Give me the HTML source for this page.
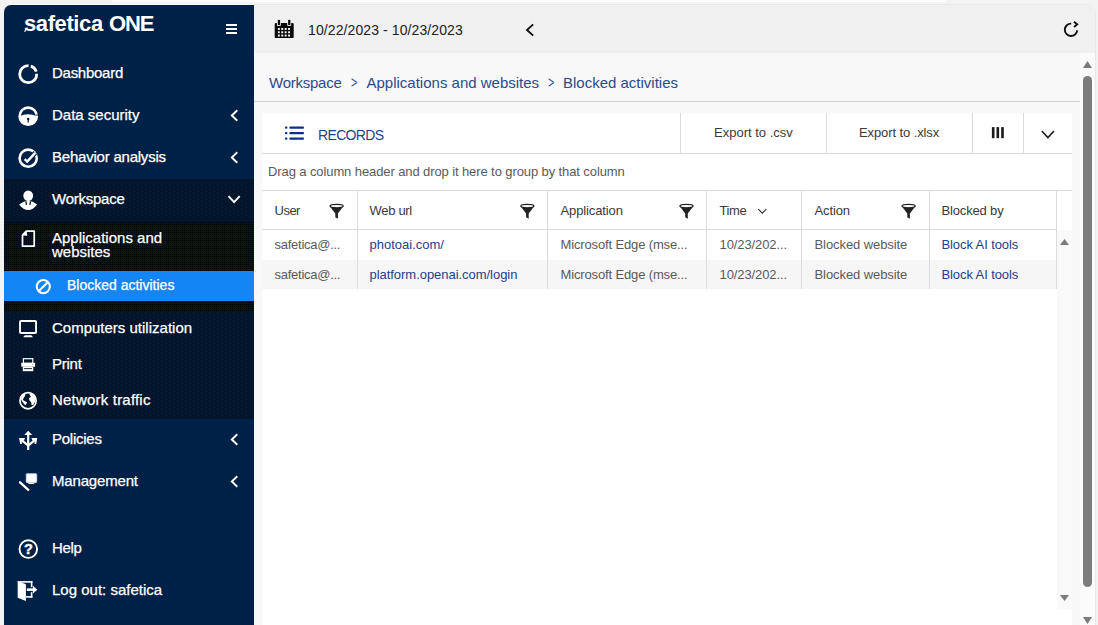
<!DOCTYPE html>
<html lang="en">
<head>
<meta charset="utf-8">
<title>Safetica ONE - Blocked activities</title>
<style>
*{box-sizing:border-box;margin:0;padding:0}
html,body{width:1098px;height:625px;overflow:hidden;background:#f3f3f3;font-family:"Liberation Sans",Arial,sans-serif;}
.abs{position:absolute}
.t{position:absolute;white-space:nowrap;line-height:1}
svg{position:absolute;overflow:visible}
#side{position:absolute;left:0;top:0;width:254px;height:625px}
#sidebg{position:absolute;left:4px;top:5px;width:250px;height:620px;background:#002147;border-top-left-radius:7px}
#side .t{color:#fff;font-size:15px;-webkit-text-stroke:0.25px #fff}
#main{position:absolute;left:0;top:0;width:1098px;height:625px}
#mainbg{position:absolute;left:254px;top:5px;width:841px;height:620px;background:#f8f8f8;border-top-right-radius:8px}
#topbar{position:absolute;left:254px;top:5px;width:841px;height:48px;background:#f0f0f0;border-top-right-radius:8px}
#card{position:absolute;left:262px;top:113px;width:810px;height:512px;background:#fff}
.hl{position:absolute;height:1px;background:#dcdcdc}
.vl{position:absolute;width:1px;background:#dcdcdc}
#main .t{font-size:13px;color:#3a3a3a}
#main .t.bc{font-size:15px;color:#2c4a8c}
#main .t.sep{transform:scale(.72,1.12);transform-origin:0 70%}
#main .t.lnk{color:#24408e}
#main .t.cell{color:#5a5a5a}
</style>
</head>
<body>
<div class="abs" style="left:112px;top:0;width:833px;height:2px;background:#fff"></div>
<div class="abs" style="left:4px;top:4px;width:260px;height:10px;background:#faf9f7;border-radius:8px 0 0 0"></div>
<div class="abs" style="left:254px;top:4px;width:842px;height:621px;background:#e9e9e9;border-radius:0 9px 0 0"></div>

<div id="side">
  <div id="sidebg"></div>
  <div class="t" id="logo" style="left:24px;top:13px;font-size:22px;font-weight:bold;letter-spacing:-0.4px;-webkit-text-stroke:0">safetica <span style="letter-spacing:-1.1px;margin-left:0.6px">ONE</span></div>
  <svg id="burger" style="left:225.7px;top:24px" width="11" height="10" viewBox="0 0 11 10"><path d="M0 1h11M0 5h11M0 9h11" stroke="#fff" stroke-width="2" fill="none"/></svg>

  <div class="abs" id="wsbg" style="left:4px;top:179px;width:250px;height:240px;background:#02152b"></div>
  <div class="abs" id="subbg" style="left:4px;top:221px;width:250px;height:90px;background:linear-gradient(#02152a 50%,transparent 50%) 0 0/2px 2px,linear-gradient(90deg,#000 50%,#02152a 50%) 0 0/2px 2px"></div>
  <div class="abs" style="left:4px;top:271px;width:250px;height:30px;background:#1485f5"></div>


  <svg id="sideicons" style="left:0;top:0" width="254" height="625" viewBox="0 0 254 625" fill="none" stroke="none">
    <pattern id="dots" width="8" height="8" patternUnits="userSpaceOnUse"><rect x="1" y="1" width="1" height="1" fill="#072250"/><rect x="5" y="3" width="1" height="1" fill="#072250"/><rect x="2" y="5" width="1" height="1" fill="#072250"/><rect x="6" y="7" width="1" height="1" fill="#072250"/></pattern>
    <rect x="4" y="181" width="250" height="38" fill="url(#dots)"/>
    <rect x="4" y="313" width="250" height="104" fill="url(#dots)"/>
    <path d="M26.3,28.4L24.6,31.7" stroke="#fff" stroke-width="1.2"/>
    <!-- dashboard -->
    <g stroke="#fff" stroke-width="2.8" fill="none">
      <path d="M36.69,73.76A8.5,8.5 0 1 1 28.50,65.71"/>
      <path d="M30.83,66.12A8.5,8.5 0 0 1 36.28,71.57"/>
    </g>
    <!-- data security -->
    <g>
      <circle cx="28.2" cy="116.2" r="8.6" stroke="#fff" stroke-width="2.6"/>
      <path d="M19,116.6Q28.2,111.8 37.4,116.6A9.3,9.3 0 0 1 19,116.6z" fill="#fff"/>
      <circle cx="28.2" cy="119" r="1.25" fill="#002147"/>
      <rect x="27.6" y="119" width="1.2" height="3.6" fill="#002147"/>
      <rect x="35.4" y="114.6" width="3" height="0.9" fill="#002147"/>
    </g>
    <!-- behavior analysis -->
    <g>
      <circle cx="28.2" cy="158.2" r="8.6" stroke="#fff" stroke-width="2.6"/>
      <path d="M24.6,159.2L27.2,161.6L35.4,152.6" stroke="#002147" stroke-width="4.6"/>
      <path d="M24.6,159.2L27.2,161.6L35.2,152.8" stroke="#fff" stroke-width="2.5"/>
    </g>
    <!-- workspace -->
    <g>
      <ellipse cx="28.2" cy="195.7" rx="4.9" ry="5.2" fill="#fff"/>
      <path d="M19.1,204.4Q23.6,200.9 28.2,200.8Q32.8,200.9 37.1,204.4Q33,209.9 28.2,209.9Q23.4,209.9 19.1,204.4z" fill="#fff"/>
      <path d="M25.9,201.3L26.5,204.9M30.5,201.3L29.9,204.9" stroke="#02152b" stroke-width="1.3"/>
    </g>
    <!-- applications and websites -->
    <g>
      <path d="M22.5,235.2L26.3,231.1H34.2V246.1H22.5z" stroke="#fff" stroke-width="1.7" stroke-linejoin="round"/>
      <path d="M22.5,235.4L26.6,231.1L27.3,235.7z" fill="#fff"/>
    </g>
    <!-- blocked -->
    <g stroke="#fff" stroke-width="2.1">
      <circle cx="43.3" cy="286.6" r="6.55"/>
      <path d="M38.6,291.3L48,281.9"/>
    </g>
    <!-- computers utilization -->
    <g>
      <rect x="20.05" y="321" width="16" height="12" rx="0.8" stroke="#fff" stroke-width="1.9"/>
      <path d="M24.8,335.2H31.4L33,337.3H23.2z" fill="#fff"/>
    </g>
    <!-- print -->
    <g>
      <rect x="23.4" y="358.7" width="9.4" height="4.6" stroke="#fff" stroke-width="1.2"/>
      <rect x="21.2" y="362.8" width="13.9" height="3.9" fill="#fff"/>
      <rect x="22.8" y="366.6" width="10.5" height="4.6" fill="#fff"/>
      <rect x="24" y="368.2" width="8" height="0.9" fill="#02152b"/>
      <rect x="32.2" y="364" width="0.9" height="0.9" fill="#8a8a8a"/>
    </g>
    <!-- network traffic -->
    <g>
      <circle cx="28.05" cy="400.7" r="8.1" stroke="#fff" stroke-width="1.7"/>
      <path d="M21.5,396.5L23.7,394.1L25.7,393.1L25.1,395.7L23.7,397.9L22.9,400.1L25.9,401.7L27.3,402.5L25.3,405.3L23.7,403.6L22.1,401.4L21.0,399.2z" fill="#fff"/>
      <path d="M29.3,393.9L31.2,393.7L33.9,395.6L35.2,398.4L35.0,401.7L33.3,405.1L31.6,405.3L31.2,402.2L29.3,400.3L29.0,398.3L30.8,396.9L30.2,395.5z" fill="#fff"/>
    </g>
    <!-- policies -->
    <g fill="#fff">
      <path d="M24.2,435.1L28.2,430.8L32.2,435.1z"/>
      <rect x="27.1" y="434" width="2.2" height="16"/>
      <path d="M19.1,438H25L24,440.4H21.8V444H20.2z"/>
      <path d="M37.3,438H31.4L32.4,440.4H34.6V444H36.2z"/>
      <path d="M21.6,440.2L28.2,445.6L34.8,440.2" stroke="#fff" stroke-width="2.3" fill="none"/>
    </g>
    <!-- management -->
    <g>
      <rect x="26.3" y="473.8" width="10.4" height="8.6" rx="0.6" fill="#fff" stroke="#d9dcef" stroke-width="0.9"/>
      <rect x="28.4" y="483" width="5.9" height="1" fill="#fff"/>
      <path d="M20,482.3L28.3,489.8" stroke="#fff" stroke-width="2.3" stroke-linecap="round"/>
    </g>
    <!-- help -->
    <g>
      <circle cx="28.3" cy="549.1" r="8.8" stroke="#fff" stroke-width="1.9"/>
      <text x="28.5" y="554.1" font-family="Liberation Sans, Arial, sans-serif" font-weight="bold" font-size="14.5" fill="#fff" stroke="#fff" stroke-width="0.4" text-anchor="middle">?</text>
    </g>
    <!-- logout -->
    <g fill="#fff">
      <path d="M17.7,581.1L25.9,584.3V600.9L17.7,597.7z"/>
      <rect x="17.7" y="581.1" width="14.7" height="1.6"/>
      <rect x="30.8" y="581.1" width="1.6" height="6"/>
      <rect x="30.8" y="592.2" width="1.6" height="5.5"/>
      <rect x="25.9" y="596.1" width="6.5" height="1.6"/>
      <rect x="26.8" y="588.4" width="6.6" height="2.5"/>
      <path d="M32.9,585.7L37.3,589.7L32.9,593.6z"/>
    </g>
    <!-- chevrons -->
    <g stroke="#fff" stroke-width="1.9" fill="none">
      <path d="M237.3,110.3L231.8,115.5L237.3,120.7"/>
      <path d="M237.3,152.3L231.8,157.5L237.3,162.7"/>
      <path d="M228.5,196.2L234.1,202.2L239.7,196.2"/>
      <path d="M237.3,434.3L231.8,439.5L237.3,444.7"/>
      <path d="M237.3,476.3L231.8,481.5L237.3,486.7"/>
    </g>
  </svg>
  <div class="t" style="left:52px;top:65px;letter-spacing:-0.27px">Dashboard</div>
  <div class="t" style="left:52px;top:107px">Data security</div>
  <div class="t" style="left:52px;top:149px;letter-spacing:-0.22px">Behavior analysis</div>
  <div class="t" style="left:52px;top:191px;letter-spacing:-0.25px">Workspace</div>
  <div class="t" style="left:52px;top:230px">Applications and</div>
  <div class="t" style="left:52px;top:244px">websites</div>
  <div class="t" style="left:67px;top:278px;font-size:14px">Blocked activities</div>
  <div class="t" style="left:52px;top:320px">Computers utilization</div>
  <div class="t" style="left:52px;top:356px;letter-spacing:-0.24px">Print</div>
  <div class="t" style="left:52px;top:392px;letter-spacing:0.2px">Network traffic</div>
  <div class="t" style="left:52px;top:431px;letter-spacing:-0.25px">Policies</div>
  <div class="t" style="left:52px;top:473px;letter-spacing:-0.17px">Management</div>
  <div class="t" style="left:52px;top:540px;letter-spacing:-0.3px">Help</div>
  <div class="t" style="left:52px;top:582px">Log out: safetica</div>
</div>

<div id="main">
  <div id="mainbg"></div>
  <div id="topbar"></div>
  <div class="t" style="left:308px;top:23px;font-size:14px;color:#222;letter-spacing:0.1px">10/22/2023 - 10/23/2023</div>

  <div class="t bc" style="left:269px;top:75px;letter-spacing:-0.25px">Workspace</div>
  <div class="t bc sep" style="left:351px;top:75px">&gt;</div>
  <div class="t bc" style="left:366.5px;top:75px">Applications and websites</div>
  <div class="t bc sep" style="left:548px;top:75px">&gt;</div>
  <div class="t bc" style="left:563px;top:75px">Blocked activities</div>
  <div class="hl" style="left:254px;top:101px;width:826px;background:#d2d2d2"></div>

  <div id="card"></div>
  <!-- toolbar -->
  <div class="t" style="left:318px;top:128px;font-size:14px;color:#1f3f8f;letter-spacing:-0.65px">RECORDS</div>
  <div class="t" style="left:714px;top:126px">Export to .csv</div>
  <div class="t" style="left:859px;top:126px;letter-spacing:-0.1px">Export to .xlsx</div>
  <div class="vl" style="left:680px;top:113px;height:40px"></div>
  <div class="vl" style="left:826px;top:113px;height:40px"></div>
  <div class="vl" style="left:972px;top:113px;height:40px"></div>
  <div class="vl" style="left:1023px;top:113px;height:40px"></div>
  <div class="hl" style="left:262px;top:153px;width:810px"></div>
  <!-- group panel -->
  <div class="t" style="left:268px;top:165px;font-size:13px;letter-spacing:-0.1px;color:#5a5a5a">Drag a column header and drop it here to group by that column</div>
  <div class="hl" style="left:262px;top:190px;width:810px"></div>
  <!-- rows -->
  <div class="abs" style="left:262px;top:260px;width:795px;height:29px;background:#f6f6f6"></div>
  <div class="hl" style="left:262px;top:229px;width:795px"></div>
  <!-- column lines -->
  <div class="vl" style="left:357px;top:191px;height:98px"></div>
  <div class="vl" style="left:547px;top:191px;height:98px"></div>
  <div class="vl" style="left:706px;top:191px;height:98px"></div>
  <div class="vl" style="left:801px;top:191px;height:98px"></div>
  <div class="vl" style="left:929px;top:191px;height:98px"></div>
  <div class="vl" style="left:1056px;top:191px;height:98px"></div>
  <!-- header text -->
  <div class="t" style="left:274.5px;top:204px;letter-spacing:-0.5px">User</div>
  <div class="t" style="left:369.5px;top:204px;letter-spacing:-0.3px">Web url</div>
  <div class="t" style="left:560.5px;top:204px;letter-spacing:-0.12px">Application</div>
  <div class="t" style="left:719.5px;top:204px;letter-spacing:-0.4px">Time</div>
  <div class="t" style="left:814.5px;top:204px;letter-spacing:-0.12px">Action</div>
  <div class="t" style="left:941.5px;top:204px;letter-spacing:-0.16px">Blocked by</div>
  <!-- row 1 -->
  <div class="t cell" style="left:274.5px;top:238px;letter-spacing:-0.26px">safetica@...</div>
  <div class="t lnk" style="left:369.5px;top:238px">photoai.com/</div>
  <div class="t cell" style="left:560.5px;top:238px;letter-spacing:-0.14px">Microsoft Edge (mse...</div>
  <div class="t cell" style="left:719.5px;top:238px;letter-spacing:-0.1px">10/23/202...</div>
  <div class="t cell" style="left:814.5px;top:238px;letter-spacing:-0.08px">Blocked website</div>
  <div class="t lnk" style="left:941.5px;top:238px;letter-spacing:-0.1px">Block AI tools</div>
  <!-- row 2 -->
  <div class="t cell" style="left:274.5px;top:268px;letter-spacing:-0.26px">safetica@...</div>
  <div class="t lnk" style="left:369.5px;top:268px;letter-spacing:-0.04px">platform.openai.com/login</div>
  <div class="t cell" style="left:560.5px;top:268px;letter-spacing:-0.14px">Microsoft Edge (mse...</div>
  <div class="t cell" style="left:719.5px;top:268px;letter-spacing:-0.1px">10/23/202...</div>
  <div class="t cell" style="left:814.5px;top:268px;letter-spacing:-0.08px">Blocked website</div>
  <div class="t lnk" style="left:941.5px;top:268px;letter-spacing:-0.1px">Block AI tools</div>


  <svg id="mainicons" style="left:0;top:0" width="1098" height="625" viewBox="0 0 1098 625" fill="none" stroke="none">
    <!-- calendar -->
    <g>
      <rect x="274.7" y="22.9" width="19" height="15.2" rx="1.2" fill="#0a0a0a"/>
      <rect x="276.9" y="19.2" width="4" height="6.8" rx="1" fill="#f0f0f0"/>
      <rect x="287.2" y="19.2" width="4" height="6.8" rx="1" fill="#f0f0f0"/>
      <rect x="277.8" y="19.9" width="2.3" height="5.2" fill="#0a0a0a"/>
      <rect x="288.1" y="19.9" width="2.3" height="5.2" fill="#0a0a0a"/>
      <g fill="#fff">
        <rect x="277.9" y="28" width="1.9" height="1.9"/><rect x="281.3" y="28" width="1.9" height="1.9"/><rect x="284.7" y="28" width="1.9" height="1.9"/><rect x="288.1" y="28" width="1.9" height="1.9"/>
        <rect x="277.9" y="31.3" width="1.9" height="1.9"/><rect x="281.3" y="31.3" width="1.9" height="1.9"/><rect x="284.7" y="31.3" width="1.9" height="1.9"/><rect x="288.1" y="31.3" width="1.9" height="1.9"/>
        <rect x="277.9" y="34.6" width="1.9" height="1.9"/><rect x="281.3" y="34.6" width="1.9" height="1.9"/><rect x="284.7" y="34.6" width="1.9" height="1.9"/><rect x="288.1" y="34.6" width="1.9" height="1.9"/>
      </g>
    </g>
    <!-- top chevron -->
    <path d="M533.2,24.4L527,30L533.2,35.6" stroke="#111" stroke-width="1.9"/>
    <!-- refresh -->
    <g stroke="#111" stroke-width="1.9">
      <path d="M1077.2,30.3A6.2,6.2 0 1 1 1071.2,23.6"/>
      <path d="M1073.9,21.8L1077.2,24.3L1074.1,27"/>
    </g>
    <!-- list icon -->
    <g fill="#0c2f8c">
      <rect x="285" y="126.5" width="2.4" height="2.3" rx="0.8"/><rect x="289.3" y="126.5" width="14.7" height="2.3" rx="1"/>
      <rect x="285" y="132" width="2.4" height="2.3" rx="0.8"/><rect x="289.3" y="132" width="14.7" height="2.3" rx="1"/>
      <rect x="285" y="137.5" width="2.4" height="2.3" rx="0.8"/><rect x="289.3" y="137.5" width="14.7" height="2.3" rx="1"/>
    </g>
    <!-- columns icon -->
    <g fill="#1a1a1a">
      <rect x="991.9" y="127.1" width="2.6" height="11.1"/><rect x="996.5" y="127.1" width="2.6" height="11.1"/><rect x="1001.2" y="127.1" width="2.6" height="11.1"/>
    </g>
    <!-- toolbar chevron -->
    <path d="M1041.8,131L1047.9,137.5L1054,131" stroke="#1a1a1a" stroke-width="1.6"/>
    <!-- sort chevron -->
    <path d="M758.3,209.2L762.3,213.2L766.3,209.2" stroke="#333" stroke-width="1.2"/>
    <!-- filters -->
    <g transform="translate(336.6,206.1)"><path d="M-7,0L-1.3,7.3V11.2L1.3,12.6V7.3L7,0z" fill="#222"/>
        <ellipse cx="0" cy="0" rx="6.6" ry="1.7" fill="#fff" stroke="#222" stroke-width="1.15"/></g>
    <g transform="translate(527.4,206.1)"><path d="M-7,0L-1.3,7.3V11.2L1.3,12.6V7.3L7,0z" fill="#222"/>
        <ellipse cx="0" cy="0" rx="6.6" ry="1.7" fill="#fff" stroke="#222" stroke-width="1.15"/></g>
    <g transform="translate(686.5,206.1)"><path d="M-7,0L-1.3,7.3V11.2L1.3,12.6V7.3L7,0z" fill="#222"/>
        <ellipse cx="0" cy="0" rx="6.6" ry="1.7" fill="#fff" stroke="#222" stroke-width="1.15"/></g>
    <g transform="translate(908.6,206.1)"><path d="M-7,0L-1.3,7.3V11.2L1.3,12.6V7.3L7,0z" fill="#222"/>
        <ellipse cx="0" cy="0" rx="6.6" ry="1.7" fill="#fff" stroke="#222" stroke-width="1.15"/></g>
  </svg>
  <!-- inner scrollbar -->
  <div class="abs" style="left:1057px;top:230px;width:15px;height:380px;background:#f9f9f9"></div>
  <svg style="left:1060px;top:239px" width="9" height="6" viewBox="0 0 9 6"><path d="M0 6L4.5 0L9 6z" fill="#7a7a7a"/></svg>
  <svg style="left:1060px;top:595px" width="9" height="6" viewBox="0 0 9 6"><path d="M0 0L4.5 6L9 0z" fill="#7a7a7a"/></svg>
  <!-- outer scrollbar -->
  <div class="abs" style="left:1080px;top:53px;width:15px;height:572px;background:#fbfbfb"></div>
  <svg style="left:1083px;top:61px" width="9" height="7" viewBox="0 0 9 7"><path d="M0 7L4.5 0L9 7z" fill="#7a7a7a"/></svg>
  <div class="abs" style="left:1083px;top:76px;width:9px;height:511px;background:#7c7c7c;border-radius:4.5px"></div>
  <svg style="left:1083px;top:617px" width="9" height="7" viewBox="0 0 9 7"><path d="M0 0L4.5 7L9 0z" fill="#7a7a7a"/></svg>
</div>
</body>
</html>
